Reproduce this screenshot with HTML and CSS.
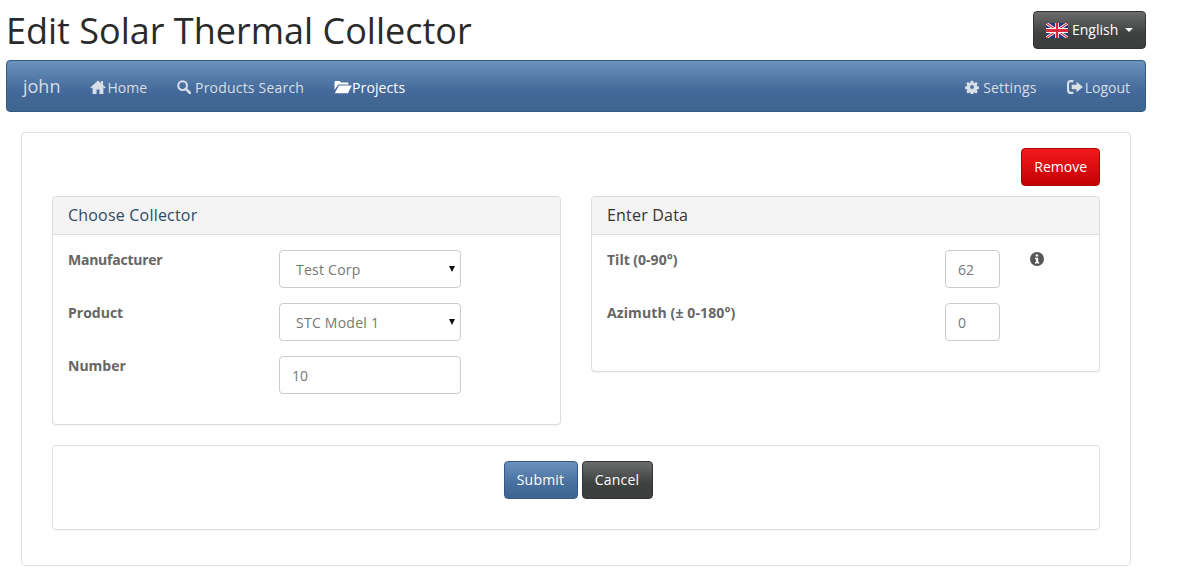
FILE: index.html
```html
<!DOCTYPE html>
<html lang="en">
<head>
<meta charset="utf-8">
<title>Edit Solar Thermal Collector</title>
<link rel="stylesheet" href="styles.css">
</head>
<body>
<div class="page">
  <header class="top">
    <h1 class="title">Edit Solar Thermal Collector</h1>
    <button class="btn btn-dark lang" type="button">
      <svg class="flag" viewBox="0 0 60 30" width="22" height="15" preserveAspectRatio="none">
        <rect width="60" height="30" fill="#26367f"/>
        <path d="M0 0L60 30M60 0L0 30" stroke="#fff" stroke-width="6"/>
        <path d="M0 0L60 30M60 0L0 30" stroke="#d8283c" stroke-width="2.5"/>
        <path d="M30 0V30M0 15H60" stroke="#fff" stroke-width="10"/>
        <path d="M30 0V30M0 15H60" stroke="#d8283c" stroke-width="6"/>
      </svg>
      <span>English</span>
      <span class="caret"></span>
    </button>
  </header>

  <nav class="navbar">
    <a class="brand" href="#">john</a>
    <a class="nav-link nav-home" href="#">
      <svg class="ico ico-home" viewBox="0 0 16 14" width="16" height="14"><path d="M8 0.5L0.3 7.4l1 1L2.6 7.3V14h4V9.5h2.8V14h4V7.3l1.3 1.1 1-1L13 5V1h-2v2.2z" fill="currentColor"/></svg>Home
    </a>
    <a class="nav-link nav-search" href="#">
      <svg class="ico ico-search" viewBox="0 0 14 14" width="14" height="14"><circle cx="5.6" cy="5.6" r="4.4" fill="none" stroke="currentColor" stroke-width="2"/><path d="M8.8 8.8L13 13" stroke="currentColor" stroke-width="2.6" stroke-linecap="round"/></svg>Products Search
    </a>
    <a class="nav-link active" href="#">
      <svg class="ico ico-folder" viewBox="0 0 18 14" width="18" height="14"><path d="M0.5 2.2Q0.5 1 1.7 1H5.5L7 2.6H13.4Q14.5 2.6 14.5 3.7V4.6H4.2L0.5 10z" fill="currentColor"/><path d="M4.9 5.6H17.8L14 13.2H0.8z" fill="currentColor"/></svg>Projects
    </a>
    <div class="nav-right">
      <a class="nav-link nav-settings" href="#">
        <svg class="ico ico-gear" viewBox="0 0 14 14" width="14" height="14"><path fill="currentColor" fill-rule="evenodd" d="M5.7 0h2.6l.4 2 1.2.5 1.7-1.1 1.8 1.8-1.1 1.7.5 1.2 2 .4v2.6l-2 .4-.5 1.2 1.1 1.7-1.8 1.8-1.7-1.1-1.2.5-.4 2H5.7l-.4-2-1.2-.5-1.7 1.1L.6 12.4l1.1-1.7-.5-1.2-2-.4V6.5l2-.4.5-1.2L.6 3.2l1.8-1.8 1.7 1.1 1.2-.5zM7 4.9a2.1 2.1 0 1 0 0 4.2 2.1 2.1 0 0 0 0-4.2z" transform="translate(.7 .7) scale(.9)"/></svg>Settings
      </a>
      <a class="nav-link" href="#">
        <svg class="ico ico-logout" viewBox="0 0 15 13" width="16" height="14"><path d="M6 1H3.4Q1 1 1 3.4v6.2Q1 12 3.4 12H6" fill="none" stroke="currentColor" stroke-width="2"/><path d="M9 1.5L15 6.5 9 11.5V8.6H4.4V4.4H9z" fill="currentColor"/></svg>Logout
      </a>
    </div>
  </nav>

  <main class="outer">
    <div class="actions">
      <button class="btn btn-red" type="button">Remove</button>
    </div>
    <div class="columns">
      <section class="panel panel-left">
        <h2 class="panel-head">Choose Collector</h2>
        <div class="panel-body">
          <div class="row">
            <label class="label label-tight">Manufacturer</label>
            <div class="select">Test Corp<span class="arrow"></span></div>
          </div>
          <div class="row">
            <label class="label">Product</label>
            <div class="select">STC Model 1<span class="arrow"></span></div>
          </div>
          <div class="row">
            <label class="label">Number</label>
            <input class="input input-wide" type="text" value="10">
          </div>
        </div>
      </section>
      <section class="panel panel-right">
        <h2 class="panel-head">Enter Data</h2>
        <div class="panel-body">
          <div class="row row-data">
            <label class="label">Tilt (0-90°)</label>
            <input class="input input-small" type="text" value="62">
            <svg class="info" viewBox="0 0 14 14" width="14" height="14"><circle cx="7" cy="7" r="7" fill="#555"/><path d="M5.6 2.6h2.6v2H5.6zM5 5.7h3.2v4.2h1v1.5H5V9.9h1V7.2H5z" fill="#fff"/></svg>
          </div>
          <div class="row row-data">
            <label class="label label-wide">Azimuth (± 0-180°)</label>
            <input class="input input-small" type="text" value="0">
          </div>
        </div>
      </section>
    </div>
    <div class="footer-panel">
      <button class="btn btn-blue btn-submit" type="button">Submit</button>
      <button class="btn btn-dark btn-cancel" type="button">Cancel</button>
    </div>
  </main>
</div>
</body>
</html>
```
FILE: styles.css
```css
* { box-sizing: border-box; }
html, body { margin: 0; padding: 0; }
body {
  background: #fff;
  color: #555;
  font-family: "Open Sans", "Liberation Sans", sans-serif;
  font-size: 14px;
  line-height: 20px;
  overflow: hidden;
}
.page { height: 588px; margin-left: 6px; width: 1140px; }
.top {
  display: flex;
  justify-content: space-between;
  align-items: flex-start;
  height: 60px;
  padding-top: 11px;
}
.title {
  margin: 0;
  font-size: 36px;
  line-height: 40px;
  font-weight: 400;
  color: #2a2a2a;
}
.btn {
  font-family: inherit;
  font-size: 14px;
  line-height: 20px;
  color: #fff;
  height: 38px;
  padding: 8px 12px;
  border-radius: 4px;
  border: 1px solid #333;
  cursor: pointer;
}
.btn-dark {
  background: linear-gradient(#6a6c6c, #3f4140 60%, #3c3e3d);
  border-color: #333;
}
.btn-blue {
  background: linear-gradient(#6b91bd, #47709f 60%, #3e6590);
  border-color: #35597f;
}
.btn-red {
  background: linear-gradient(#f31a1d, #c40003);
  border-color: #a80003;
}
.btn-submit { width: 74px; padding: 8px 0; letter-spacing: .2px; }
.btn-cancel { width: 71px; padding: 8px 0; letter-spacing: .2px; }
.lang {
  display: flex;
  align-items: center;
  width: 113px;
  padding: 8px 12px;
  white-space: nowrap;
}
.flag { margin-right: 4px; flex: none; }
.caret {
  margin-left: 7px;
  border-top: 4px solid #fff;
  border-left: 4px solid transparent;
  border-right: 4px solid transparent;
}
.navbar {
  display: flex;
  align-items: center;
  height: 52px;
  padding: 0 15px 0 16px;
  border: 1px solid #355a80;
  border-radius: 4px;
  background: linear-gradient(#6a92bd, #44699a 60%, #3f658f);
}
.brand {
  font-size: 18px;
  line-height: 20px;
  color: #d5dde6;
  text-decoration: none;
  margin-right: 30px;
}
.nav-link {
  display: flex;
  align-items: center;
  color: #d9dfe6;
  text-decoration: none;
  margin-right: 30px;
  padding-top: 4px;
}
.nav-link.active { color: #fff; letter-spacing: .1px; }
.nav-search { letter-spacing: .2px; }
.nav-settings { letter-spacing: .2px; }
.ico { flex: none; margin-right: 2px; margin-top: -2px; }
.ico-home { margin-right: 1px; }
.ico-search { margin-right: 4px; }
.ico-gear { margin-right: 4px; }
.ico-folder { margin-right: 0; }
.ico-logout { margin-right: 2px; }
.nav-right { margin-left: auto; display: flex; }
.nav-right .nav-link { margin-right: 0; margin-left: 30px; }
.outer {
  margin-top: 20px;
  margin-left: 15px;
  width: 1110px;
  height: 434px;
  border: 1px solid #e2e2e2;
  border-radius: 4px;
  padding: 15px 30px;
}
.actions { display: flex; justify-content: flex-end; height: 48px; }
.columns { display: flex; justify-content: space-between; align-items: flex-start; }
.panel {
  width: 509px;
  border: 1px solid #ddd;
  border-radius: 4px;
  box-shadow: 0 1px 1px rgba(0,0,0,.05);
  background: #fff;
  overflow: hidden;
}
.panel-left { height: 229px; }
.panel-right { height: 176px; }
.panel-head {
  margin: 0;
  height: 38px;
  padding: 7px 15px;
  background: #f4f4f4;
  border-bottom: 1px solid #ddd;
  font-size: 16px;
  line-height: 22px;
  font-weight: 400;
  letter-spacing: .2px;
  color: #2f4a63;
}
.panel-right .panel-head { color: #333; }
.panel-body { padding: 15px 15px 0; }
.row { display: flex; align-items: flex-start; height: 38px; margin-bottom: 15px; }
.label { width: 211px; flex: none; font-weight: 700; color: #666; }
.label-tight { letter-spacing: -.25px; }
.label-wide { letter-spacing: .12px; }
.panel-right .label { width: 338px; }
.select, .input {
  height: 38px;
  border: 1px solid #ccc;
  border-radius: 4px;
  background: #fff;
  color: #777;
  font-family: inherit;
  font-size: 14px;
}
.select {
  position: relative;
  width: 182px;
  padding-left: 16px;
  line-height: 38px;
  letter-spacing: .25px;
}
.arrow {
  position: absolute;
  right: 5px;
  top: 15px;
  border-top: 6px solid #111;
  border-left: 3px solid transparent;
  border-right: 3px solid transparent;
}
.input { padding: 0 12px; display: block; }
.input-wide { width: 182px; }
.input-small { width: 55px; }
.info { margin-left: 30px; margin-top: 2px; flex: none; }
.footer-panel {
  margin-top: 20px;
  height: 85px;
  border: 1px solid #e2e2e2;
  border-radius: 4px;
  box-shadow: 0 1px 1px rgba(0,0,0,.05);
  padding: 15px 0 0 4px;
  display: flex;
  justify-content: center;
  align-items: flex-start;
  gap: 4px;
}
```
